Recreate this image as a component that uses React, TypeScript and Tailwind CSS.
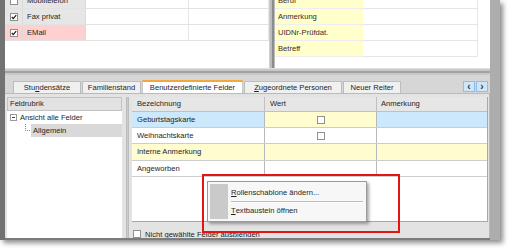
import React from 'react';

const Check = ({ checked = false }: { checked?: boolean }) => (
  <div className="w-[8px] h-[8px] bg-white border border-[#8e8f8f] flex items-center justify-center">
    {checked && (
      <svg width="6" height="6" viewBox="0 0 6 6">
        <path d="M0.8 3 L2.3 4.6 L5.2 1.2" fill="none" stroke="#222" strokeWidth="1.3" />
      </svg>
    )}
  </div>
);

const contactRows = [
  { label: 'Mobiltelefon', checked: false, bg: 'bg-[#e6e6e6]' },
  { label: 'Fax privat', checked: true, bg: 'bg-[#e6e6e6]' },
  { label: 'EMail', checked: true, bg: 'bg-[#ffd0d0]' },
];

const infoRows = ['Beruf', 'Anmerkung', 'UIDNr-Prüfdat.', 'Betreff'];

const fieldRows = [
  { name: 'Geburtstagskarte', check: true, h: 'h-[16px]', name_bg: 'bg-[#cce8fc]', wert_bg: 'bg-[#fffcd0]', anm_bg: 'bg-[#cce8fc]' },
  { name: 'Weihnachtskarte', check: true, h: 'h-[16px]', name_bg: 'bg-white', wert_bg: 'bg-white', anm_bg: 'bg-white' },
  { name: 'Interne Anmerkung', check: false, h: 'h-[17px]', name_bg: 'bg-[#fffcd0]', wert_bg: 'bg-[#fffcd0]', anm_bg: 'bg-[#fffcd0]' },
  { name: 'Angeworben', check: false, h: 'h-[16px]', name_bg: 'bg-white', wert_bg: 'bg-white', anm_bg: 'bg-white' },
];

const Tab = ({ children, w, active = false }: { children: React.ReactNode; w: string; active?: boolean }) => (
  <div
    className={`${w} flex items-center justify-center border border-b-0 ${
      active
        ? 'h-[13px] bg-white border-[#c8c8c8] border-t-2 border-t-[#f2a93b]'
        : 'h-[12px] bg-[#f0f0f0] border-[#bdbdbd]'
    }`}
  >
    {children}
  </div>
);

export default function App() {
  return (
    <div className="w-[513px] h-[250px] bg-white relative overflow-hidden font-['Liberation_Sans',Arial,sans-serif] text-[7.6px] leading-none text-[#1e1e1e]">
      <div className="w-[500px] h-[240px] flex bg-[#adadad] shadow-[3px_3px_5px_rgba(0,0,0,0.45)] overflow-hidden">
        <div className="w-[5px] bg-[#727272]" />
        <div className="w-[485px] flex flex-col">
          {/* top panels, scrolled so the first row is half hidden */}
          <div className="h-[68px] flex overflow-hidden">
            <div className="w-[265px] bg-white border-r border-[#d0d0d0] overflow-hidden">
              <div className="-mt-[7px]">
                {contactRows.map((r) => (
                  <div key={r.label} className="h-[16px] flex border-b border-[#e2e2e2]">
                    <div className={`w-[18px] ${r.bg} border-r border-[#dadada] flex items-center justify-center`}>
                      <Check checked={r.checked} />
                    </div>
                    <div className={`w-[63px] ${r.bg} border-r border-[#dadada] flex items-center pl-[4px]`}>{r.label}</div>
                    <div className="w-[103px] border-r border-[#e6e6e6]" />
                    <div className="flex-1 border-r border-[#e6e6e6]" />
                  </div>
                ))}
              </div>
            </div>
            <div className="w-[5px] bg-[#bcbcbc] flex justify-center">
              <div className="w-[2px] bg-[#8c8c8c]" />
            </div>
            <div className="w-[215px] bg-white overflow-hidden">
              <div className="-mt-[7px]">
                {infoRows.map((l) => (
                  <div key={l} className="h-[16px] flex">
                    <div className="w-[88px] bg-[#ffffcc] border-b border-[#eeeeee] flex items-center pl-[3px] text-[#3a2a2a]">{l}</div>
                    <div className="w-[115px] border-r border-b border-[#e6e6e6]" />
                  </div>
                ))}
              </div>
            </div>
          </div>

          {/* splitter */}
          <div className="h-[7px] bg-[#c8c8c8] flex flex-col">
            <div className="h-[1px] bg-[#e0e0e0]" />
            <div className="h-[2px]" />
            <div className="h-[2px] bg-[#a2a2a2]" />
          </div>

          {/* tab area */}
          <div className="h-[163px] flex flex-col bg-[#d6d6d6]">
            <div className="h-[18px] flex items-end pl-[8px] pr-[1px]">
              <div className="flex items-end gap-[1px]">
                <Tab w="w-[68px]">
                  Stu<span className="underline">n</span>densätze
                </Tab>
                <Tab w="w-[59px]">Familienstand</Tab>
                <Tab w="w-[101px]" active>
                  Benutzerdefinierte Felder
                </Tab>
                <Tab w="w-[98px]">
                  <span className="underline">Z</span>ugeordnete Personen
                </Tab>
                <Tab w="w-[58px]">Neuer Reiter</Tab>
              </div>
              <div className="ml-auto mb-[1px] flex gap-[1px] pr-[1px]">
                {['‹', '›'].map((c) => (
                  <div key={c} className="w-[12px] h-[11px] bg-[#cfe5f9] border border-[#8fbde8] flex items-center justify-center text-[10px] font-bold text-[#333]">
                    {c}
                  </div>
                ))}
              </div>
            </div>

            {/* tab page */}
            <div className="h-[145px] bg-[#e3e3e3] border-t border-r border-[#bababa] flex pt-[3px] pl-[2px]">
              {/* tree */}
              <div className="w-[115px] bg-white flex flex-col">
                <div className="h-[14px] bg-[#e2e2e2] border border-[#c2c2c2] flex items-center pl-[2px]">Feldrubrik</div>
                <div className="h-[13px] flex items-center pl-[3px] gap-[3px]">
                  <div className="w-[7px] h-[7px] border border-[#9a9a9a] flex items-center justify-center">
                    <div className="w-[3px] h-[1px] bg-[#444]" />
                  </div>
                  <span>Ansicht alle Felder</span>
                </div>
                <div className="h-[13px] flex items-stretch pl-[18px]">
                  <div className="w-[5px] h-[7px] border-l border-b border-dotted border-[#8a8a8a]" />
                  <div className="flex-1 bg-[#d9d9d9] flex items-center pl-[2px] ml-[1px]">Allgemein</div>
                </div>
              </div>

              {/* splitter */}
              <div className="w-[10px] flex justify-center">
                <div className="w-[3px] bg-[#cbcbcb] border-x border-[#bcbcbc]" />
              </div>

              {/* grid */}
              <div className="w-[356px] flex flex-col">
                <div className="h-[125px] bg-white border-r border-b border-[#a8a8a8] flex flex-col">
                  <div className="h-[15px] flex bg-[#e6e6e6] border-b border-[#c0c0c0]">
                    <div className="w-[133px] border-r border-[#c0c0c0] flex items-center pl-[5px]">Bezeichnung</div>
                    <div className="w-[112px] border-r border-[#c0c0c0] flex items-center pl-[5px]">Wert</div>
                    <div className="flex-1 flex items-center pl-[4px]">Anmerkung</div>
                  </div>
                  {fieldRows.map((r) => (
                    <div key={r.name} className={`${r.h} flex border-b border-[#cdcdcd]`}>
                      <div className={`w-[133px] ${r.name_bg} border-r border-[#b8b8b8] flex items-center pl-[5px]`}>{r.name}</div>
                      <div className={`w-[112px] ${r.wert_bg} border-r border-[#b8b8b8] flex items-center justify-center`}>
                        {r.check && <Check />}
                      </div>
                      <div className={`flex-1 ${r.anm_bg}`} />
                    </div>
                  ))}
                </div>
                <div className="flex-1 flex items-start pt-[8px] pl-[1px] gap-[4px] overflow-hidden">
                  <Check />
                  <span className="mt-[1px]">Nicht gewählte Felder ausblenden</span>
                </div>
              </div>
            </div>
          </div>

          <div className="h-[2px] bg-[#7c7c7c]" />
        </div>
        <div className="w-[10px] bg-[#adadad]" />
      </div>

      {/* highlight and context menu */}
      <div className="absolute left-[202px] top-[174px] w-[198px] h-[59px] border-2 border-[#e41414]" />
      <div className="absolute left-[207px] top-[181px] w-[160px] h-[41px] bg-[#f7f7f7] border border-[#9a9a9a] shadow-[2px_2px_3px_rgba(0,0,0,0.35)] flex p-[2px]">
        <div className="w-[18px] bg-[#cacaca]" />
        <div className="flex-1 flex flex-col pl-[3px]">
          <div className="h-[17px] flex items-center pt-[1px]">
            <span className="underline">R</span>ollenschablone ändern...
          </div>
          <div className="h-[2px] border-t border-[#bdbdbd] border-b border-b-white mr-[1px]" />
          <div className="flex-1 flex items-center">
            <span className="underline">T</span>extbaustein öffnen
          </div>
        </div>
      </div>
    </div>
  );
}
